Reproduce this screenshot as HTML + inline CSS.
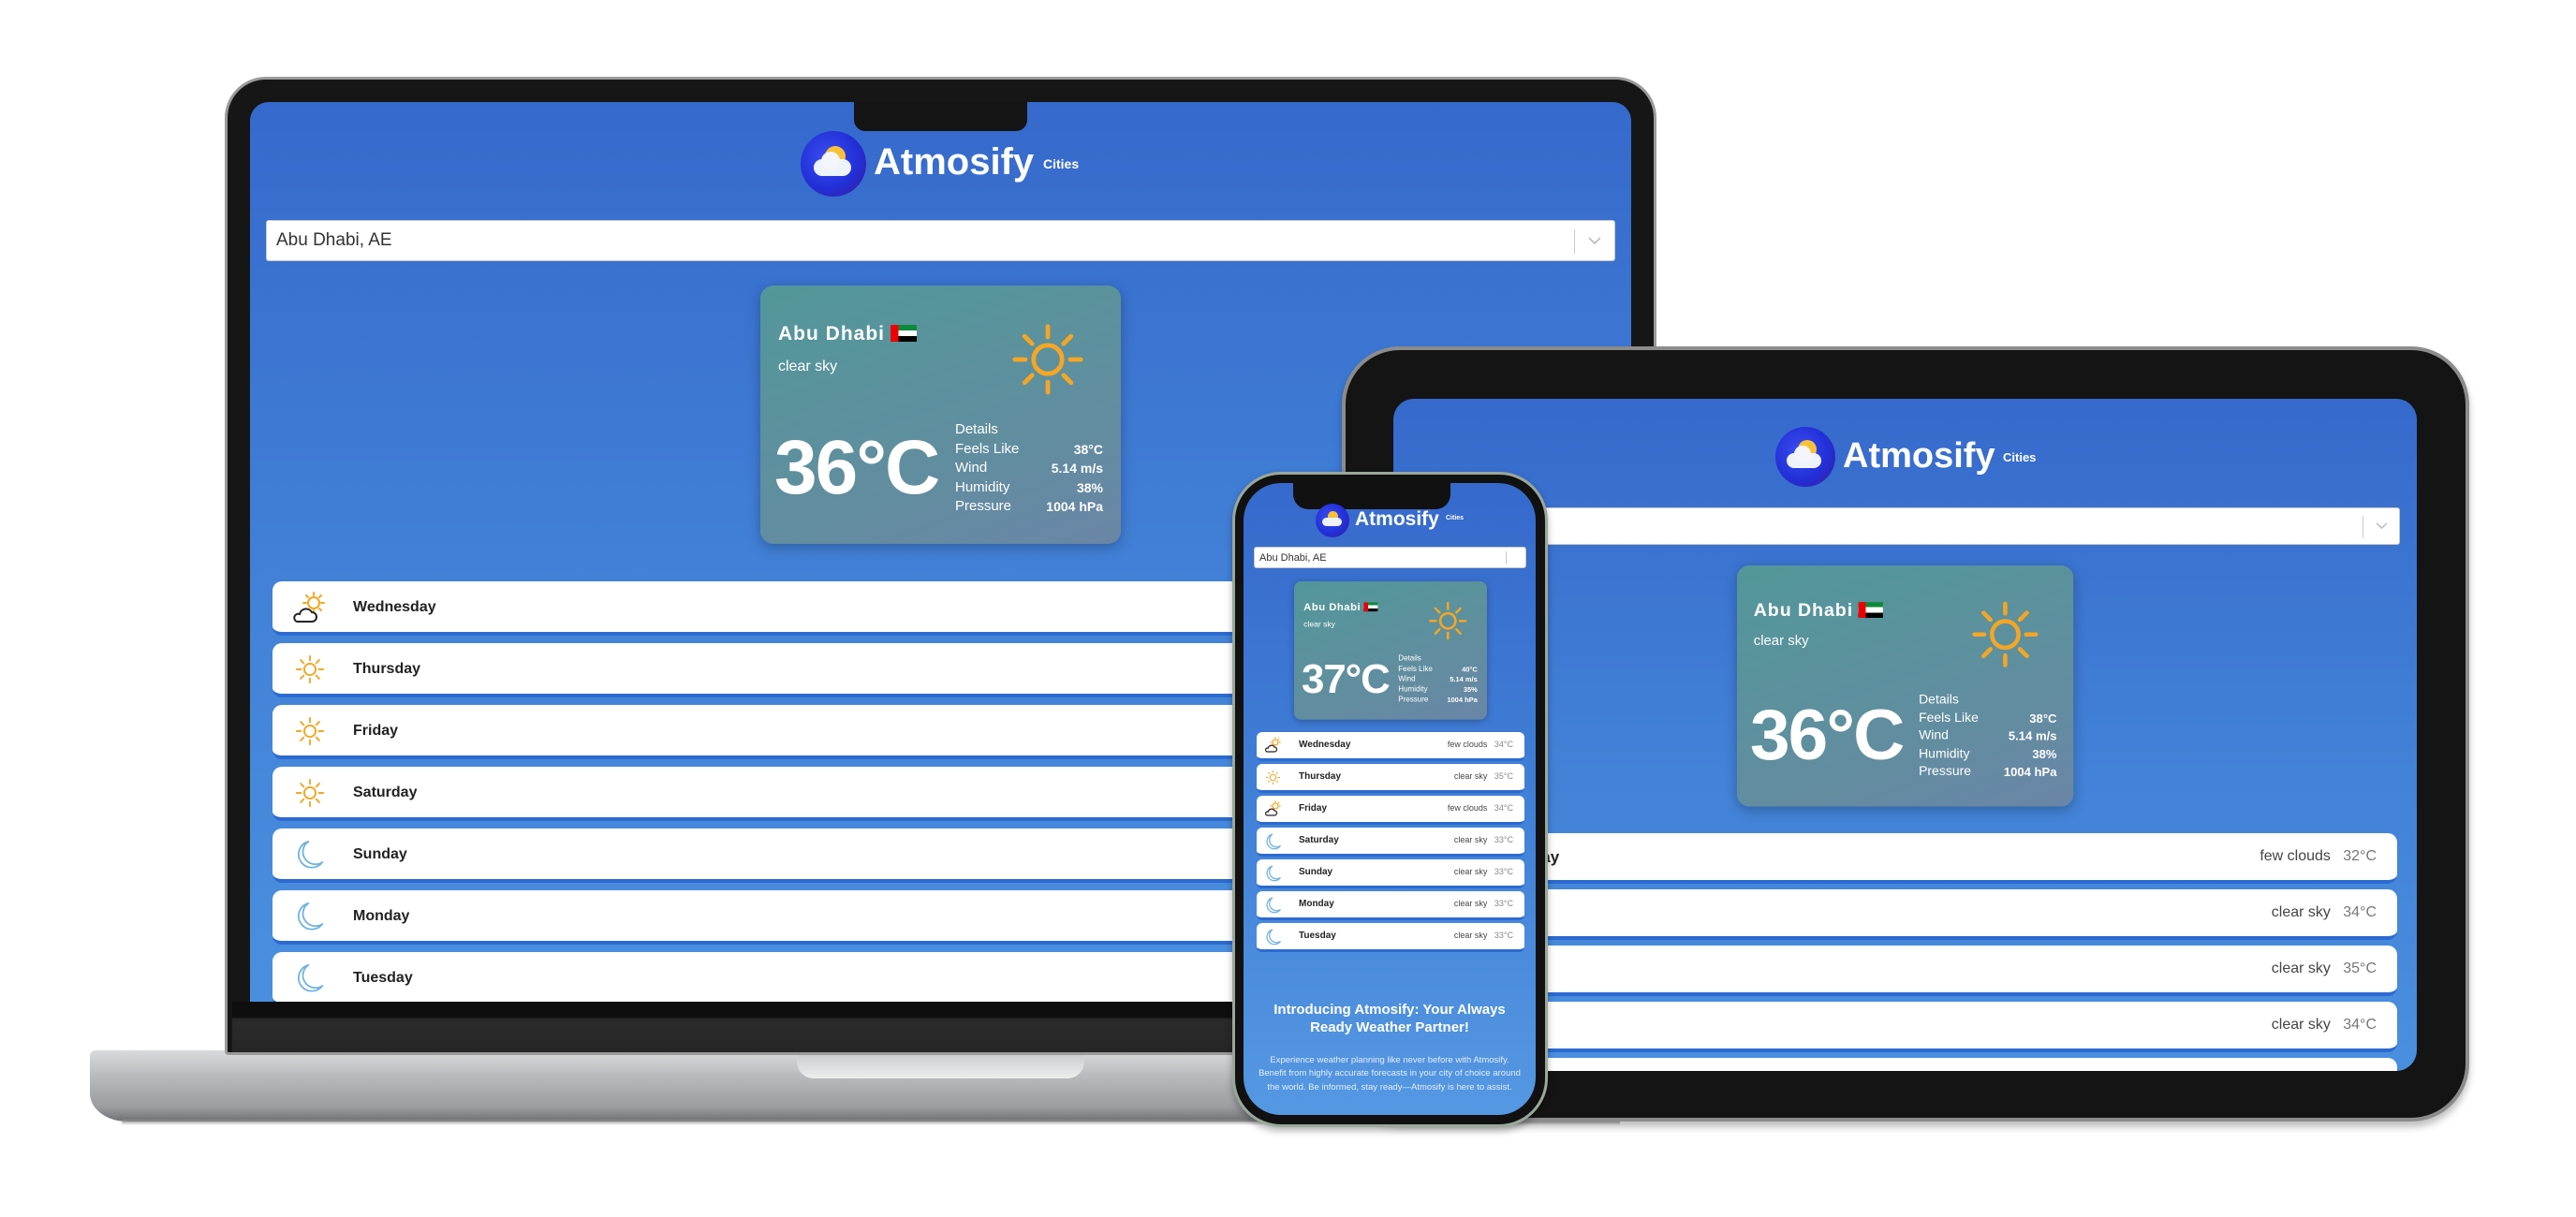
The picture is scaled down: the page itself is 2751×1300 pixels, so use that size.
<!DOCTYPE html>
<html><head><meta charset="utf-8"><style>
*{margin:0;padding:0;box-sizing:border-box}
body{width:2751px;height:1300px;background:#fff;position:relative;overflow:hidden;font-family:"Liberation Sans",sans-serif}
.abs{position:absolute}
.scr{position:absolute;overflow:hidden;background:linear-gradient(180deg,#3669cc 0%,#4180d6 50%,#4a8fdf 100%)}
.logo{position:absolute;border-radius:50%;background:radial-gradient(circle at 40% 40%,#3a4ef0 0%,#2230d8 55%,#3a1a9a 100%)}
.brand{position:absolute;color:#fff;font-weight:bold;white-space:nowrap}
.search{position:absolute;background:#fff;border:1px solid #c8c8c8;border-radius:3px;color:#333}
.card{position:absolute;width:385px;height:276px;border-radius:14px;background:linear-gradient(160deg,#52979a 0%,#5f8f9e 55%,#6a86a6 100%);box-shadow:0 4px 14px rgba(0,0,0,.25);color:#fff;transform-origin:0 0}
.card .city{position:absolute;left:19px;top:40px;font-size:21px;font-weight:bold;letter-spacing:1px}
.card .desc{position:absolute;left:19px;top:78px;font-size:16px}
.card .temp{position:absolute;left:15px;top:148px;font-size:82px;font-weight:bold;letter-spacing:-2px}
.card .det{position:absolute;left:208px;top:144px;width:158px;font-size:15px;line-height:20.5px}
.card .det div{display:flex;justify-content:space-between}
.card .det b{font-size:14px}
.flag{display:inline-block;width:28px;height:18px;vertical-align:-2px;margin-left:6px;background:linear-gradient(90deg,#e00 0 30%,transparent 30%),linear-gradient(180deg,#0a8a3a 0 33%,#fff 33% 66%,#000 66%)}
.row{position:absolute;background:#fff;border-radius:10px;border-bottom:4px solid #2c6ad0;color:#222}
.row .d{position:absolute;font-weight:bold}
.row .r{position:absolute;color:#444;white-space:nowrap}
.row svg{position:absolute}
</style></head><body>

<!-- LAPTOP -->
<div class="abs" style="left:96px;top:1122px;width:1676px;height:76px;border-radius:6px 6px 40px 40px/6px 6px 30px 30px;background:linear-gradient(180deg,#d9dadc 0%,#b9bbbe 35%,#9a9ca0 80%,#6e7074 100%)"></div>
<div class="abs" style="left:851px;top:1124px;width:307px;height:28px;border-radius:0 0 18px 18px;background:linear-gradient(180deg,#c9cacd,#eceded)"></div>
<div class="abs" style="left:130px;top:1196px;width:1600px;height:6px;background:linear-gradient(180deg,#888,rgba(255,255,255,0))"></div>
<div class="abs" style="left:240px;top:82px;width:1529px;height:1045px;border-radius:44px 44px 4px 4px;background:#161616;border:3px solid #9a9a9a"></div>
<div class="abs" style="left:248px;top:1070px;width:1513px;height:54px;background:linear-gradient(180deg,#0e0e0e 0%,#0e0e0e 30%,#2a2a2a 35%,#262626 100%)"></div>
<div class="scr" style="left:267px;top:109px;width:1475px;height:961px;border-radius:20px 20px 0 0">
  <div class="abs" style="left:645px;top:0;width:185px;height:31px;background:#141414;border-radius:0 0 12px 12px"></div>
  <div class="logo" style="left:588px;top:31px;width:70px;height:70px">
    <div class="abs" style="left:26px;top:16px;width:22px;height:22px;border-radius:50%;background:#f7c23a"></div>
    <div class="abs" style="left:14px;top:30px;width:40px;height:18px;border-radius:10px;background:#eef2fb"></div>
    <div class="abs" style="left:22px;top:22px;width:20px;height:20px;border-radius:50%;background:#f3f5fb"></div>
  </div>
  <div class="brand" style="left:666px;top:42px;font-size:40px">Atmosify</div>
  <div class="brand" style="left:847px;top:58px;font-size:14px">Cities</div>
  <div class="search" style="left:17px;top:126px;width:1441px;height:44px;font-size:19px;padding:10px 10px">Abu Dhabi, AE
    <div class="abs" style="right:42px;top:9px;width:1px;height:26px;background:#ccc"></div>
    <svg class="abs" style="right:14px;top:17px" width="14" height="9" viewBox="0 0 14 9"><path d="M1 1l6 6 6-6" stroke="#bbb" stroke-width="1.6" fill="none"/></svg>
  </div>
  <div class="card" style="left:545px;top:196px">
    <div class="city">Abu Dhabi<span class="flag"></span></div>
    <div class="desc">clear sky</div>
    <svg class="abs" style="left:267px;top:39px" width="80" height="80" viewBox="-50 -50 100 100"><g stroke="#f5a623" stroke-width="6" stroke-linecap="round" fill="none"><circle r="19"/><path d="M0-30V-44M0 30V44M-30 0H-44M30 0H44M21-21L31-31M-21-21L-31-31M21 21L31 31M-21 21L-31 31"/></g></svg>
    <div class="temp">36°C</div>
    <div class="det"><div>Details</div><div>Feels Like<b>38°C</b></div><div>Wind<b>5.14 m/s</b></div><div>Humidity<b>38%</b></div><div>Pressure<b>1004 hPa</b></div></div>
  </div>
  <div class="row" style="left:24px;top:512px;width:1430px;height:58px"><svg style="left:20px;top:9px" width="40" height="40" viewBox="0 0 40 40"><g stroke="#f5a623" stroke-width="2" fill="none" stroke-linecap="round"><circle cx="24" cy="14" r="6"/><path d="M24 3v3M24 22v3M13 14h3M32 14h3M16 6l2 2M32 6l-2 2M32 22l-2-2"/></g><path d="M6 34h16a5 5 0 0 0 0-10 7 7 0 0 0-13 2 4 4 0 0 0-3 8z" stroke="#222" stroke-width="2" fill="#fff"/></svg><div class="d" style="left:86px;top:19px;font-size:16px">Wednesday</div></div>
  <div class="row" style="left:24px;top:578px;width:1430px;height:58px"><svg style="left:24px;top:12px" width="32" height="32" viewBox="-50 -50 100 100"><g stroke="#f5a623" stroke-width="6" stroke-linecap="round" fill="none"><circle r="19"/><path d="M0-30V-44M0 30V44M-30 0H-44M30 0H44M21-21L31-31M-21-21L-31-31M21 21L31 31M-21 21L-31 31"/></g></svg><div class="d" style="left:86px;top:19px;font-size:16px">Thursday</div></div>
  <div class="row" style="left:24px;top:644px;width:1430px;height:58px"><svg style="left:24px;top:12px" width="32" height="32" viewBox="-50 -50 100 100"><g stroke="#f5a623" stroke-width="6" stroke-linecap="round" fill="none"><circle r="19"/><path d="M0-30V-44M0 30V44M-30 0H-44M30 0H44M21-21L31-31M-21-21L-31-31M21 21L31 31M-21 21L-31 31"/></g></svg><div class="d" style="left:86px;top:19px;font-size:16px">Friday</div></div>
  <div class="row" style="left:24px;top:710px;width:1430px;height:58px"><svg style="left:24px;top:12px" width="32" height="32" viewBox="-50 -50 100 100"><g stroke="#f5a623" stroke-width="6" stroke-linecap="round" fill="none"><circle r="19"/><path d="M0-30V-44M0 30V44M-30 0H-44M30 0H44M21-21L31-31M-21-21L-31-31M21 21L31 31M-21 21L-31 31"/></g></svg><div class="d" style="left:86px;top:19px;font-size:16px">Saturday</div></div>
  <div class="row" style="left:24px;top:776px;width:1430px;height:58px"><svg style="left:26px;top:11px" width="30" height="34" viewBox="0 0 34 38"><path d="M14 3A16 16 0 1 0 31 28 14 14 0 0 1 14 3z" stroke="#6fb2e2" stroke-width="2" fill="none" stroke-linejoin="round"/></svg><div class="d" style="left:86px;top:19px;font-size:16px">Sunday</div></div>
  <div class="row" style="left:24px;top:842px;width:1430px;height:58px"><svg style="left:26px;top:11px" width="30" height="34" viewBox="0 0 34 38"><path d="M14 3A16 16 0 1 0 31 28 14 14 0 0 1 14 3z" stroke="#6fb2e2" stroke-width="2" fill="none" stroke-linejoin="round"/></svg><div class="d" style="left:86px;top:19px;font-size:16px">Monday</div></div>
  <div class="row" style="left:24px;top:908px;width:1430px;height:58px"><svg style="left:26px;top:11px" width="30" height="34" viewBox="0 0 34 38"><path d="M14 3A16 16 0 1 0 31 28 14 14 0 0 1 14 3z" stroke="#6fb2e2" stroke-width="2" fill="none" stroke-linejoin="round"/></svg><div class="d" style="left:86px;top:19px;font-size:16px">Tuesday</div></div>
</div>

<!-- TABLET -->
<div class="abs" style="left:1433px;top:370px;width:1204px;height:828px;border-radius:62px;background:#141414;border:4px solid #8c8c8c;box-shadow:0 6px 8px rgba(0,0,0,.25)"></div>
<div class="scr" style="left:1488px;top:426px;width:1093px;height:718px;border-radius:22px">
  <div class="logo" style="left:408px;top:30px;width:64px;height:64px">
    <div class="abs" style="left:24px;top:14px;width:20px;height:20px;border-radius:50%;background:#f7c23a"></div>
    <div class="abs" style="left:12px;top:28px;width:37px;height:16px;border-radius:9px;background:#eef2fb"></div>
    <div class="abs" style="left:20px;top:20px;width:18px;height:18px;border-radius:50%;background:#f3f5fb"></div>
  </div>
  <div class="brand" style="left:480px;top:40px;font-size:38px">Atmosify</div>
  <div class="brand" style="left:651px;top:55px;font-size:13px">Cities</div>
  <div class="search" style="left:17px;top:116px;width:1058px;height:40px">
    <div class="abs" style="right:38px;top:8px;width:1px;height:24px;background:#ccc"></div>
    <svg class="abs" style="right:12px;top:15px" width="13" height="8" viewBox="0 0 14 9"><path d="M1 1l6 6 6-6" stroke="#bbb" stroke-width="1.6" fill="none"/></svg>
  </div>
  <div class="card" style="left:367px;top:178px;transform:scale(.933)">
    <div class="city">Abu Dhabi<span class="flag"></span></div>
    <div class="desc">clear sky</div>
    <svg class="abs" style="left:267px;top:39px" width="80" height="80" viewBox="-50 -50 100 100"><g stroke="#f5a623" stroke-width="6" stroke-linecap="round" fill="none"><circle r="19"/><path d="M0-30V-44M0 30V44M-30 0H-44M30 0H44M21-21L31-31M-21-21L-31-31M21 21L31 31M-21 21L-31 31"/></g></svg>
    <div class="temp">36°C</div>
    <div class="det"><div>Details</div><div>Feels Like<b>38°C</b></div><div>Wind<b>5.14 m/s</b></div><div>Humidity<b>38%</b></div><div>Pressure<b>1004 hPa</b></div></div>
  </div>
  <div class="row" style="left:19px;top:464px;width:1053px;height:54px"><div class="d" style="left:64px;top:16px;font-size:17px">Wednesday</div><div class="r" style="right:22px;top:16px;font-size:16px">few clouds &nbsp;&nbsp;<span style="color:#777">32°C</span></div></div>
  <div class="row" style="left:19px;top:524px;width:1053px;height:54px"><div class="d" style="left:64px;top:16px;font-size:17px">Thursday</div><div class="r" style="right:22px;top:16px;font-size:16px">clear sky &nbsp;&nbsp;<span style="color:#777">34°C</span></div></div>
  <div class="row" style="left:19px;top:584px;width:1053px;height:54px"><div class="d" style="left:64px;top:16px;font-size:17px">Friday</div><div class="r" style="right:22px;top:16px;font-size:16px">clear sky &nbsp;&nbsp;<span style="color:#777">35°C</span></div></div>
  <div class="row" style="left:19px;top:644px;width:1053px;height:54px"><div class="d" style="left:64px;top:16px;font-size:17px">Saturday</div><div class="r" style="right:22px;top:16px;font-size:16px">clear sky &nbsp;&nbsp;<span style="color:#777">34°C</span></div></div>
  <div class="row" style="left:19px;top:704px;width:1053px;height:54px"></div>
</div>

<!-- PHONE -->
<div class="abs" style="left:1316px;top:504px;width:337px;height:700px;border-radius:52px;background:#111;border:3px solid #9aa89a;box-shadow:0 4px 8px rgba(0,0,0,.3)"></div>
<div class="scr" style="left:1328px;top:516px;width:312px;height:675px;border-radius:40px;background:linear-gradient(180deg,#3669cc 0%,#4282d8 55%,#5598e2 100%)">
  <div class="abs" style="left:53px;top:0;width:168px;height:28px;background:#111;border-radius:0 0 16px 16px"></div>
  <div class="logo" style="left:77px;top:22px;width:36px;height:36px">
    <div class="abs" style="left:13px;top:8px;width:11px;height:11px;border-radius:50%;background:#f7c23a"></div>
    <div class="abs" style="left:7px;top:15px;width:21px;height:9px;border-radius:5px;background:#eef2fb"></div>
  </div>
  <div class="brand" style="left:119px;top:27px;font-size:21px">Atmosify</div>
  <div class="brand" style="left:216px;top:34px;font-size:7px">Cities</div>
  <div class="search" style="left:11px;top:68px;width:291px;height:23px;font-size:11px;padding:5px 5px">Abu Dhabi, AE
    <div class="abs" style="right:20px;top:4px;width:1px;height:14px;background:#ccc"></div>
  </div>
  <div class="card" style="left:54px;top:105px;transform:scale(.535)">
    <div class="city">Abu Dhabi<span class="flag"></span></div>
    <div class="desc">clear sky</div>
    <svg class="abs" style="left:267px;top:39px" width="80" height="80" viewBox="-50 -50 100 100"><g stroke="#f5a623" stroke-width="6" stroke-linecap="round" fill="none"><circle r="19"/><path d="M0-30V-44M0 30V44M-30 0H-44M30 0H44M21-21L31-31M-21-21L-31-31M21 21L31 31M-21 21L-31 31"/></g></svg>
    <div class="temp">37°C</div>
    <div class="det"><div>Details</div><div>Feels Like<b>40°C</b></div><div>Wind<b>5.14 m/s</b></div><div>Humidity<b>35%</b></div><div>Pressure<b>1004 hPa</b></div></div>
  </div>
  <div class="row" style="left:14px;top:266px;width:286px;height:31px;border-bottom-width:3px;border-radius:6px"><svg style="left:8px;top:4px" width="20" height="20" viewBox="0 0 40 40"><g stroke="#f5a623" stroke-width="2.5" fill="none"><circle cx="24" cy="14" r="6"/><path d="M24 3v3M13 14h3M32 14h3M32 6l-2 2"/></g><path d="M6 34h16a5 5 0 0 0 0-10 7 7 0 0 0-13 2 4 4 0 0 0-3 8z" stroke="#222" stroke-width="2.5" fill="#fff"/></svg><div class="d" style="left:45px;top:8px;font-size:10px">Wednesday</div><div class="r" style="right:12px;top:8px;font-size:9px">few clouds &nbsp;&nbsp;<span style="color:#888">34°C</span></div></div>
  <div class="row" style="left:14px;top:300px;width:286px;height:31px;border-bottom-width:3px;border-radius:6px"><svg style="left:9px;top:6px" width="17" height="17" viewBox="-50 -50 100 100"><g stroke="#f5a623" stroke-width="6" fill="none"><circle r="19"/><path d="M0-30V-44M0 30V44M-30 0H-44M30 0H44M21-21L31-31M-21-21L-31-31M21 21L31 31M-21 21L-31 31"/></g></svg><div class="d" style="left:45px;top:8px;font-size:10px">Thursday</div><div class="r" style="right:12px;top:8px;font-size:9px">clear sky &nbsp;&nbsp;<span style="color:#888">35°C</span></div></div>
  <div class="row" style="left:14px;top:334px;width:286px;height:31px;border-bottom-width:3px;border-radius:6px"><svg style="left:8px;top:4px" width="20" height="20" viewBox="0 0 40 40"><g stroke="#f5a623" stroke-width="2.5" fill="none"><circle cx="24" cy="14" r="6"/><path d="M24 3v3M13 14h3M32 14h3M32 6l-2 2"/></g><path d="M6 34h16a5 5 0 0 0 0-10 7 7 0 0 0-13 2 4 4 0 0 0-3 8z" stroke="#222" stroke-width="2.5" fill="#fff"/></svg><div class="d" style="left:45px;top:8px;font-size:10px">Friday</div><div class="r" style="right:12px;top:8px;font-size:9px">few clouds &nbsp;&nbsp;<span style="color:#888">34°C</span></div></div>
  <div class="row" style="left:14px;top:368px;width:286px;height:31px;border-bottom-width:3px;border-radius:6px"><svg style="left:10px;top:5px" width="17" height="20" viewBox="0 0 34 38"><path d="M14 3A16 16 0 1 0 31 28 14 14 0 0 1 14 3z" stroke="#6fb2e2" stroke-width="2.5" fill="none"/></svg><div class="d" style="left:45px;top:8px;font-size:10px">Saturday</div><div class="r" style="right:12px;top:8px;font-size:9px">clear sky &nbsp;&nbsp;<span style="color:#888">33°C</span></div></div>
  <div class="row" style="left:14px;top:402px;width:286px;height:31px;border-bottom-width:3px;border-radius:6px"><svg style="left:10px;top:5px" width="17" height="20" viewBox="0 0 34 38"><path d="M14 3A16 16 0 1 0 31 28 14 14 0 0 1 14 3z" stroke="#6fb2e2" stroke-width="2.5" fill="none"/></svg><div class="d" style="left:45px;top:8px;font-size:10px">Sunday</div><div class="r" style="right:12px;top:8px;font-size:9px">clear sky &nbsp;&nbsp;<span style="color:#888">33°C</span></div></div>
  <div class="row" style="left:14px;top:436px;width:286px;height:31px;border-bottom-width:3px;border-radius:6px"><svg style="left:10px;top:5px" width="17" height="20" viewBox="0 0 34 38"><path d="M14 3A16 16 0 1 0 31 28 14 14 0 0 1 14 3z" stroke="#6fb2e2" stroke-width="2.5" fill="none"/></svg><div class="d" style="left:45px;top:8px;font-size:10px">Monday</div><div class="r" style="right:12px;top:8px;font-size:9px">clear sky &nbsp;&nbsp;<span style="color:#888">33°C</span></div></div>
  <div class="row" style="left:14px;top:470px;width:286px;height:31px;border-bottom-width:3px;border-radius:6px"><svg style="left:10px;top:5px" width="17" height="20" viewBox="0 0 34 38"><path d="M14 3A16 16 0 1 0 31 28 14 14 0 0 1 14 3z" stroke="#6fb2e2" stroke-width="2.5" fill="none"/></svg><div class="d" style="left:45px;top:8px;font-size:10px">Tuesday</div><div class="r" style="right:12px;top:8px;font-size:9px">clear sky &nbsp;&nbsp;<span style="color:#888">33°C</span></div></div>
  <div class="abs" style="left:0;top:553px;width:312px;text-align:center;color:#fff;font-weight:bold;font-size:15px;line-height:19px">Introducing Atmosify: Your Always<br>Ready Weather Partner!</div>
  <div class="abs" style="left:14px;top:610px;width:284px;text-align:center;color:#e6eefa;font-size:9.5px;line-height:14.3px">Experience weather planning like never before with Atmosify. Benefit from highly accurate forecasts in your city of choice around the world. Be informed, stay ready—Atmosify is here to assist.</div>
</div>
</body></html>
